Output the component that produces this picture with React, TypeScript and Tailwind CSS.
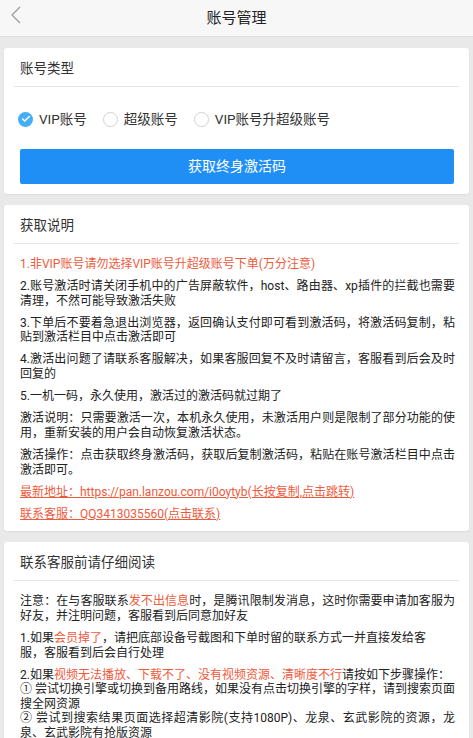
import { Check } from "lucide-react"

const font = { fontFamily: 'Roboto, "Noto Sans CJK SC", sans-serif' }

function Radio({ checked, label }: { checked?: boolean; label: string }) {
  return (
    <div className="flex items-center gap-[6px]">
      {checked ? (
        <span className="w-[15px] h-[15px] rounded-full bg-[#45aef4] flex items-center justify-center">
          <Check className="w-[10px] h-[10px] text-white" strokeWidth={3.5} />
        </span>
      ) : (
        <span className="w-[15px] h-[15px] rounded-full border border-[#d2d2d2] bg-white" />
      )}
      <span className="text-[13.5px] text-[#333]">{label}</span>
    </div>
  )
}

function Card({ title, children }: { title: string; children: React.ReactNode }) {
  return (
    <div className="bg-white rounded-[3px] shadow-[0_1px_2px_rgba(0,0,0,0.06)]">
      <div className="mx-[10px] h-[39px] pt-[2px] pl-[6px] flex items-center border-b border-[#e6e6e6] text-[13.5px] text-[#333]">
        {title}
      </div>
      {children}
    </div>
  )
}

const red = "text-[#ee5a3c]"
const body =
  "pl-[16px] pr-[14px] pt-[13px] pb-[10px] flex flex-col gap-[7.5px] text-[12px] leading-[14.6px] text-[#222] text-justify"

export default function App() {
  return (
    <div className="min-h-screen bg-[#e9e9e9]" style={font}>
      {/* header */}
      <div className="relative h-[37px] bg-[#f7f7f7] border-b border-[#dedede] flex items-center justify-center">
        <svg className="absolute left-[9px] top-[5px]" width="14" height="20" viewBox="0 0 14 20">
          <path d="M11 2 L3 10 L11 18" fill="none" stroke="#9a9a9a" strokeWidth="1.2" />
        </svg>
        <span className="text-[15px] text-[#222]">账号管理</span>
      </div>

      <div className="px-[4px] pt-[11px] pb-[11px] flex flex-col gap-[11px]">
        {/* account type */}
        <Card title="账号类型">
          <div className="px-[16px] pr-[15px] pt-[22px] pb-[10px]">
            <div className="flex items-center h-[20px] -ml-[2px] gap-[16px]">
              <Radio checked label="VIP账号" />
              <Radio label="超级账号" />
              <Radio label="VIP账号升超级账号" />
            </div>
            <button className="mt-[20px] w-full h-[35px] rounded-[2px] bg-[#1f8ff5] text-white text-[14px]">
              获取终身激活码
            </button>
          </div>
        </Card>

        {/* instructions */}
        <Card title="获取说明">
          <div className={body}>
            <p className={red}>1.非VIP账号请勿选择VIP账号升超级账号下单(万分注意)</p>
            <p>2.账号激活时请关闭手机中的广告屏蔽软件，host、路由器、xp插件的拦截也需要清理，不然可能导致激活失败</p>
            <p>3.下单后不要着急退出浏览器，返回确认支付即可看到激活码，将激活码复制，粘贴到激活栏目中点击激活即可</p>
            <p>4.激活出问题了请联系客服解决，如果客服回复不及时请留言，客服看到后会及时回复的</p>
            <p>5.一机一码，永久使用，激活过的激活码就过期了</p>
            <p>激活说明：只需要激活一次，本机永久使用，未激活用户则是限制了部分功能的使用，重新安装的用户会自动恢复激活状态。</p>
            <p>激活操作：点击获取终身激活码，获取后复制激活码，粘贴在账号激活栏目中点击激活即可。</p>
            <p className={`${red} underline`}>最新地址：https://pan.lanzou.com/i0oytyb(长按复制,点击跳转)</p>
            <p className={`${red} underline`}>联系客服：QQ3413035560(点击联系)</p>
          </div>
        </Card>

        {/* contact */}
        <Card title="联系客服前请仔细阅读">
          <div className={body}>
            <p>
              注意：在与客服联系<span className={red}>发不出信息</span>时，是腾讯限制发消息，这时你需要申请加客服为好友，并注明问题，客服看到后同意加好友
            </p>
            <p>
              1.如果<span className={red}>会员掉了</span>，请把底部设备号截图和下单时留的联系方式一并直接发给客
              <br />服，客服看到后会自行处理
            </p>
            <p>
              2.如果<span className={red}>视频无法播放、下载不了、没有视频资源、清晰度不行</span>请按如下步骤操作：
              <br />① 尝试切换引擎或切换到备用路线，如果没有点击切换引擎的字样，请到搜索页面搜全网资源
              <br />② 尝试到搜索结果页面选择超清影院(支持1080P)、龙泉、玄武影院的资源，龙泉、玄武影院有抢版资源
            </p>
          </div>
        </Card>
      </div>
    </div>
  )
}
